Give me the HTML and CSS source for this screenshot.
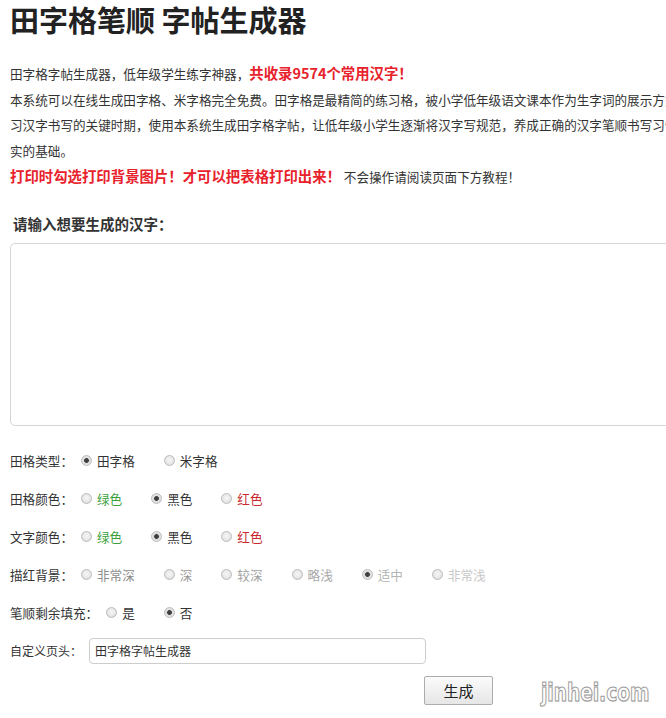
FILE: index.html
```html
<!DOCTYPE html>
<html lang="zh-CN">
<head>
<meta charset="utf-8">
<title>田字格笔顺 字帖生成器</title>
<link rel="stylesheet" href="styles.css">
</head>
<body>
<div class="page">
  <h1 class="title">田字格笔顺 字帖生成器</h1>
  <div class="intro">
    <p>田字格字帖生成器，低年级学生练字神器，<strong class="hl">共收录9574个常用汉字！</strong></p>
    <p>本系统可以在线生成田字格、米字格完全免费。田字格是最精简的练习格，被小学低年级语文课本作为生字词的展示方式。而小学低年级是学习汉字书写的关键时期，使用本系统生成田字格字帖，让低年级小学生逐渐将汉字写规范，养成正确的汉字笔顺书写习惯，为今后学习打下坚实的基础。</p>
    <p><strong class="hl">打印时勾选打印背景图片！才可以把表格打印出来！</strong> 不会操作请阅读页面下方教程！</p>
  </div>
  <h2 class="ask">请输入想要生成的汉字：</h2>
  <textarea class="chars"></textarea>
  <div class="options">
    <div class="row">
      <span class="row-label">田格类型：</span>
      <label class="opt"><input class="radio" type="radio" name="t" checked><span>田字格</span></label>
      <label class="opt"><input class="radio" type="radio" name="t"><span>米字格</span></label>
    </div>
    <div class="row">
      <span class="row-label">田格颜色：</span>
      <label class="opt"><input class="radio" type="radio" name="gc"><span class="green">绿色</span></label>
      <label class="opt"><input class="radio" type="radio" name="gc" checked><span>黑色</span></label>
      <label class="opt"><input class="radio" type="radio" name="gc"><span class="red">红色</span></label>
    </div>
    <div class="row">
      <span class="row-label">文字颜色：</span>
      <label class="opt"><input class="radio" type="radio" name="tc"><span class="green">绿色</span></label>
      <label class="opt"><input class="radio" type="radio" name="tc" checked><span>黑色</span></label>
      <label class="opt"><input class="radio" type="radio" name="tc"><span class="red">红色</span></label>
    </div>
    <div class="row">
      <span class="row-label">描红背景：</span>
      <label class="opt"><input class="radio" type="radio" name="bg"><span class="g1">非常深</span></label>
      <label class="opt"><input class="radio" type="radio" name="bg"><span class="g2">深</span></label>
      <label class="opt"><input class="radio" type="radio" name="bg"><span class="g3">较深</span></label>
      <label class="opt"><input class="radio" type="radio" name="bg"><span class="g4">略浅</span></label>
      <label class="opt"><input class="radio" type="radio" name="bg" checked><span class="g5">适中</span></label>
      <label class="opt"><input class="radio" type="radio" name="bg"><span class="g6">非常浅</span></label>
    </div>
    <div class="row">
      <span class="row-label">笔顺剩余填充：</span>
      <label class="opt"><input class="radio" type="radio" name="f"><span>是</span></label>
      <label class="opt"><input class="radio" type="radio" name="f" checked><span>否</span></label>
    </div>
    <div class="row">
      <span class="row-label small">自定义页头：</span>
      <input class="head-input" type="text" value="田字格字帖生成器">
    </div>
  </div>
  <div class="actions">
    <button class="btn" type="button">生成</button>
  </div>
</div>
<div class="watermark">jinhei.com</div>
</body>
</html>
```
FILE: styles.css
```css
html, body {
  margin: 0;
  padding: 0;
  overflow: hidden;
  background: #fff;
}
body {
  font-family: "Noto Sans CJK SC", "Microsoft YaHei", sans-serif;
  font-size: 12.6px;
  color: #333;
}
.page {
  width: 790px;
  padding: 0 10px;
}
.title {
  margin: 2px 0 0;
  font-size: 29px;
  line-height: 35px;
  font-weight: 700;
  color: #222;
}
.intro {
  margin-top: 23px;
  line-height: 25.5px;
}
.intro p {
  margin: 0;
}
.hl {
  color: #e8222c;
  font-weight: 700;
  font-size: 14.4px;
}
.ask {
  margin: 21px 0 0;
  padding-left: 3px;
  font-size: 14.5px;
  line-height: 25px;
  font-weight: 700;
  color: #333;
}
.chars {
  display: block;
  box-sizing: border-box;
  width: 100%;
  height: 183px;
  margin: 7px 0 0;
  border: 1px solid #d6d6d6;
  border-radius: 5px;
  resize: none;
  background: #fff;
}
.options {
  margin-top: 16px;
}
.row {
  display: flex;
  align-items: center;
  height: 38px;
}
.row-label {
  margin-right: 8px;
}
.row-label.small {
  font-size: 12px;
  margin-right: 7px;
}
.opt {
  display: flex;
  align-items: center;
  gap: 5px;
  margin-right: 29px;
}
.radio {
  appearance: none;
  -webkit-appearance: none;
  box-sizing: border-box;
  width: 11px;
  height: 11px;
  margin: 0;
  border: 1px solid #bcbcbc;
  border-radius: 50%;
  background: radial-gradient(circle at 50% 45%, #f6f6f6 0, #ebebeb 45%, #d4d4d4 100%);
}
.radio:checked {
  background: radial-gradient(circle, #3f3f3f 0, #3f3f3f 2px, #dcdcdc 2.8px, #ededed 100%);
}
.green { color: #3c9f3c; }
.red { color: #c8282e; }
.g1 { color: #8c8c8c; }
.g2 { color: #9c9c9c; }
.g3 { color: #a2a2a2; }
.g4 { color: #a8a8a8; }
.g5 { color: #b4b4b4; }
.g6 { color: #c8c8c8; }
.head-input {
  box-sizing: border-box;
  width: 337px;
  height: 26px;
  margin: 0;
  padding: 0 5px;
  border: 1px solid #cdcdcd;
  border-radius: 4px;
  font-family: "Noto Sans CJK SC", "Microsoft YaHei", sans-serif;
  font-size: 12px;
  color: #333;
}
.actions {
  display: flex;
  justify-content: flex-end;
  width: 483px;
  margin-top: 6px;
}
.btn {
  box-sizing: border-box;
  width: 69px;
  height: 29px;
  margin: 0;
  padding: 0;
  border: 1px solid #acacac;
  border-radius: 2px;
  background: linear-gradient(#fbfbfb, #e6e6e6);
  font-family: "Noto Sans CJK SC", "Microsoft YaHei", sans-serif;
  font-size: 15px;
  color: #222;
}
.watermark {
  position: absolute;
  left: 541px;
  top: 679px;
  font-family: "DejaVu Sans Condensed", "DejaVu Sans", sans-serif;
  font-stretch: condensed;
  font-weight: 700;
  font-size: 24px;
  color: #fff;
  -webkit-text-stroke: 1px #9a9a9a;
  text-shadow: 1px 1px 1px rgba(0, 0, 0, 0.12);
  transform: scaleX(0.86);
  transform-origin: left top;
}
```
